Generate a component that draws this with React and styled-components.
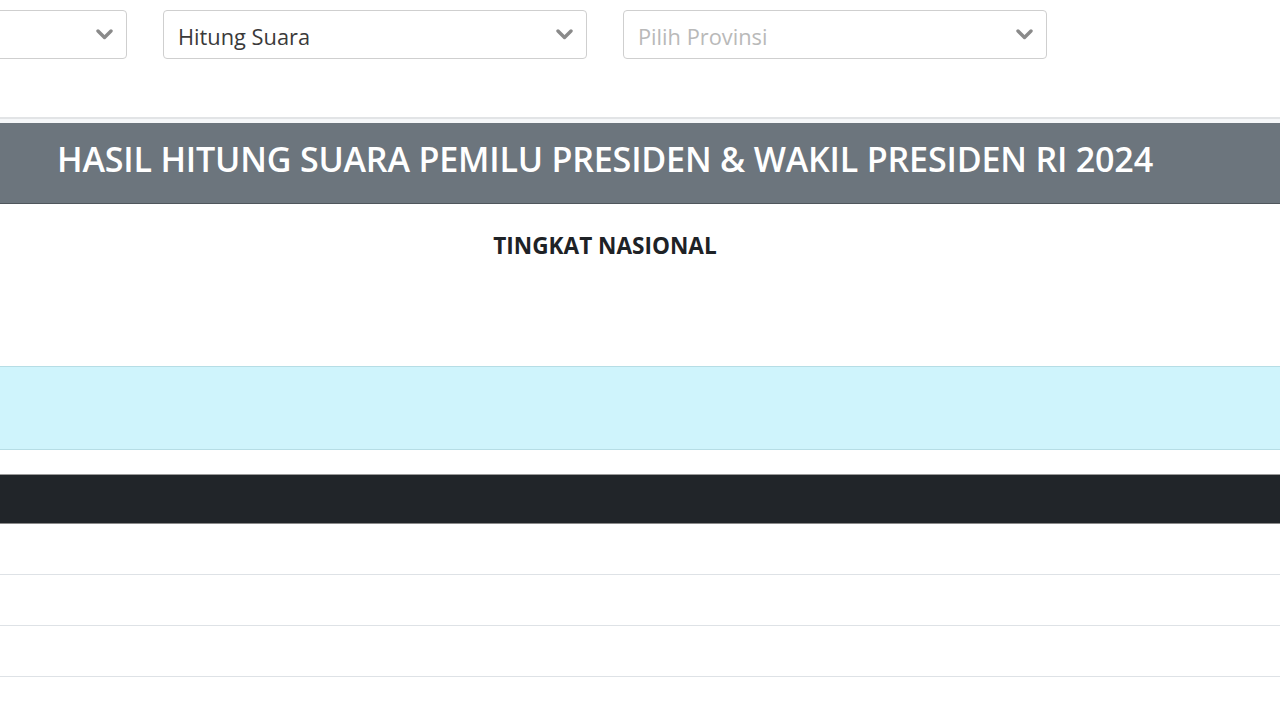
import React from "react";
import styled, { createGlobalStyle } from "styled-components";

const filters = [
  { label: "", placeholder: false },
  { label: "Hitung Suara", placeholder: false },
  { label: "Pilih Provinsi", placeholder: true },
];

function Chevron() {
  return (
    <svg width="17" height="11" viewBox="0 0 17 11">
      <polyline
        points="2,2 8.5,8.5 15,2"
        fill="none"
        stroke="#8a8a8a"
        strokeWidth="3.4"
        strokeLinecap="round"
        strokeLinejoin="round"
      />
    </svg>
  );
}

function App() {
  return (
    <>
      <GlobalStyle />
      <Page>
        <FilterRow>
          {filters.map((f, i) => (
            <Select key={i} $placeholder={f.placeholder}>
              <span>{f.label}</span>
              <Chevron />
            </Select>
          ))}
        </FilterRow>

        <TitleBar>
          <Title>HASIL HITUNG SUARA PEMILU PRESIDEN &amp; WAKIL PRESIDEN RI 2024</Title>
        </TitleBar>

        <Level>TINGKAT NASIONAL</Level>

        <InfoBand />

        <TableHead />
        <Row />
        <Row />
        <Row />
        <Row />
      </Page>
    </>
  );
}

export default App;

const GlobalStyle = createGlobalStyle`
  body {
    margin: 0;
    background: #ffffff;
    font-family: "Open Sans", "Noto Sans", sans-serif;
    color: #212529;
    overflow: hidden;
  }
`;

const Page = styled.div`
  width: 1280px;
  height: 720px;
  overflow: hidden;
`;

const FilterRow = styled.div`
  display: grid;
  grid-template-columns: repeat(3, 424px);
  column-gap: 36px;
  margin-left: -297px;
  padding-top: 10px;
`;

const Select = styled.div`
  height: 49px;
  box-sizing: border-box;
  border: 1px solid #cfcfcf;
  border-radius: 4px;
  padding: 3px 13px 0 14px;
  display: flex;
  align-items: center;
  justify-content: space-between;
  font-size: 21.8px;
  color: ${(p) => (p.$placeholder ? "#b9b9b9" : "#3a3a3a")};

  svg {
    margin-top: -3px;
  }
`;

const TitleBar = styled.div`
  margin-top: 58px;
  border-top: 2px solid #e2e4e6;
  padding-top: 4px;
  background: #f5f7f9;
`;

const Title = styled.h1`
  margin: 0;
  height: 81px;
  box-sizing: border-box;
  background: #6c757d;
  border-bottom: 1px solid #4f565c;
  color: #ffffff;
  font-size: 34.1px;
  font-weight: 600;
  line-height: 73px;
  padding-left: 57px;
  white-space: nowrap;
  letter-spacing: -0.2px;
`;

const Level = styled.div`
  margin: 28px 0 0;
  padding-right: 70px;
  text-align: center;
  font-size: 22.6px;
  font-weight: 700;
  color: #1e2226;
  height: 134px;
  line-height: 27px;
`;

const InfoBand = styled.div`
  height: 84px;
  box-sizing: border-box;
  background: #cff4fc;
  border-top: 1px solid #b6dde5;
  border-bottom: 1px solid #b6dde5;
`;

const TableHead = styled.div`
  margin-top: 24px;
  height: 50px;
  box-sizing: border-box;
  background: #212529;
  border-top: 1px solid #9a9a9a;
  border-bottom: 1px solid #8a8a8a;
`;

const Row = styled.div`
  height: 51px;
  box-sizing: border-box;
  border-bottom: 1px solid #dee2e6;
`;
